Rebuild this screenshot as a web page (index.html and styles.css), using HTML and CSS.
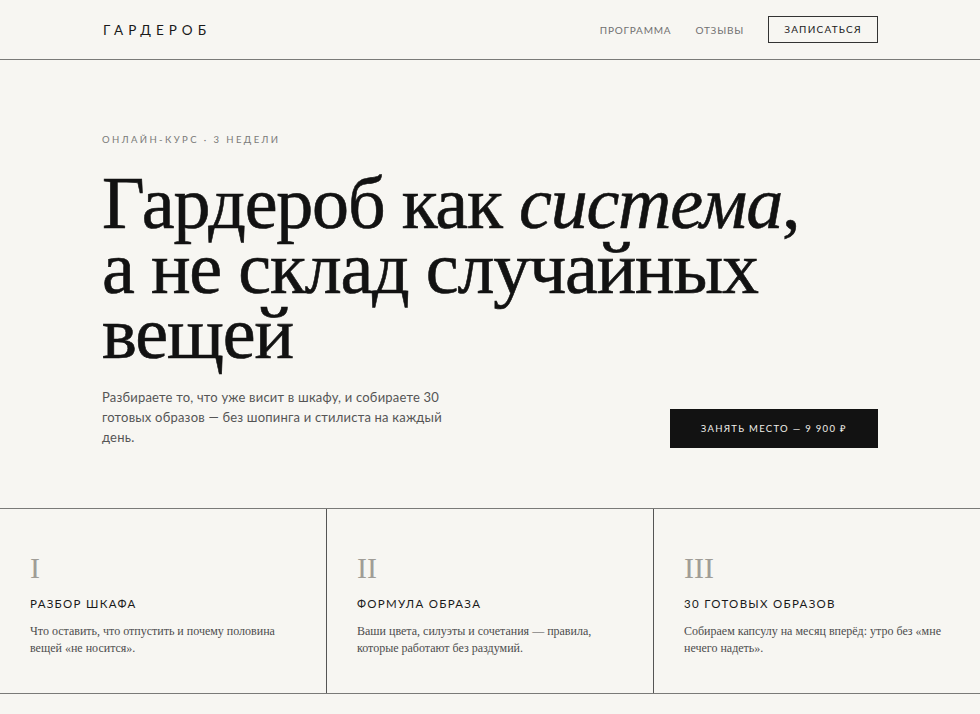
FILE: index.html
```html
<!DOCTYPE html>
<html lang="ru">
<head>
<meta charset="utf-8">
<title>Гардероб</title>
<link rel="stylesheet" href="styles.css">
</head>
<body>
<header class="topbar">
  <div class="wrap topbar-inner">
    <div class="logo">ГАРДЕРОБ</div>
    <nav class="nav">
      <a class="nav-link" href="#">ПРОГРАММА</a>
      <a class="nav-link" href="#">ОТЗЫВЫ</a>
      <a class="nav-btn" href="#">ЗАПИСАТЬСЯ</a>
    </nav>
  </div>
</header>
<section class="hero">
  <div class="wrap">
    <div class="eyebrow">ОНЛАЙН-КУРС · 3 НЕДЕЛИ</div>
    <h1 class="title">Гардероб как <em>система</em>,<br>а не склад случайных<br>вещей</h1>
    <div class="hero-bottom">
      <p class="lead">Разбираете то, что уже висит в шкафу, и собираете 30 готовых образов — без шопинга и стилиста на каждый день.</p>
      <a class="cta" href="#">ЗАНЯТЬ МЕСТО — 9 900 ₽</a>
    </div>
  </div>
</section>
<section class="features">
  <div class="card">
    <div class="num">I</div>
    <h3 class="card-title">РАЗБОР ШКАФА</h3>
    <p class="card-text">Что оставить, что отпустить и почему половина вещей «не носится».</p>
  </div>
  <div class="card">
    <div class="num">II</div>
    <h3 class="card-title">ФОРМУЛА ОБРАЗА</h3>
    <p class="card-text">Ваши цвета, силуэты и сочетания — правила, которые работают без раздумий.</p>
  </div>
  <div class="card">
    <div class="num">III</div>
    <h3 class="card-title">30 ГОТОВЫХ ОБРАЗОВ</h3>
    <p class="card-text">Собираем капсулу на месяц вперёд: утро без «мне нечего надеть».</p>
  </div>
</section>
</body>
</html>
```
FILE: styles.css
```css
* { box-sizing: border-box; }
html, body { margin: 0; padding: 0; }
body {
  background: #f7f6f2;
  color: #141414;
  font-family: "Lato", "Open Sans", sans-serif;
}
a { text-decoration: none; color: inherit; }
.wrap {
  width: 776px;
  margin: 0 auto;
}
.topbar {
  border-bottom: 1px solid #7a7a78;
  height: 60px;
}
.topbar-inner {
  height: 59px;
  display: flex;
  align-items: center;
  justify-content: space-between;
}
.logo {
  font-size: 13.5px;
  letter-spacing: 5px;
  color: #1a1a1a;
  padding-left: 1px;
}
.nav {
  display: flex;
  align-items: center;
}
.nav-link {
  font-size: 10px;
  letter-spacing: 0.8px;
  color: #707070;
  margin-right: 24px;
}
.nav-btn {
  display: block;
  border: 1px solid #333;
  height: 27px;
  width: 110px;
  line-height: 25px;
  text-align: center;
  font-size: 10px;
  letter-spacing: 1.2px;
  color: #1a1a1a;
}
.hero {
  padding-top: 74px;
  padding-bottom: 61px;
  border-bottom: 1px solid #7a7a78;
}
.eyebrow {
  font-size: 9.5px;
  letter-spacing: 2.4px;
  color: #7a7a78;
}
.title {
  margin: 26px 0 0;
  font-family: "Liberation Serif", "DejaVu Serif", serif;
  font-weight: 400;
  font-size: 74px;
  line-height: 65px;
  letter-spacing: -1.2px;
  color: #121212;
  -webkit-text-stroke: 0.6px #121212;
}
.title em { font-style: italic; }
.hero-bottom {
  margin-top: 21px;
  display: flex;
  justify-content: space-between;
  align-items: flex-end;
}
.lead {
  margin: 0;
  width: 352px;
  font-size: 13px;
  line-height: 20px;
  letter-spacing: 0.2px;
  color: #555;
}
.cta {
  display: block;
  background: #121212;
  color: #f0efea;
  width: 208px;
  height: 39px;
  line-height: 39px;
  text-align: center;
  font-size: 9.5px;
  letter-spacing: 1.3px;
  margin-bottom: -1px;
}
.features {
  display: grid;
  grid-template-columns: 327px 327px 1fr;
  border-bottom: 1px solid #7a7a78;
}
.card {
  padding: 42px 30px 36px 30px;
  border-right: 1px solid #555;
}
.card:last-child { border-right: none; }
.num {
  font-family: "Liberation Serif", serif;
  font-size: 30px;
  line-height: 34px;
  color: #a09d97;
}
.card-title {
  margin: 12px 0 0;
  font-weight: 400;
  font-size: 11.5px;
  letter-spacing: 1.3px;
  color: #1a1a1a;
}
.card-text {
  margin: 13px 0 0;
  font-family: "Liberation Serif", serif;
  font-size: 12px;
  line-height: 17px;
  color: #4d4d4d;
  max-width: 265px;
}
```
